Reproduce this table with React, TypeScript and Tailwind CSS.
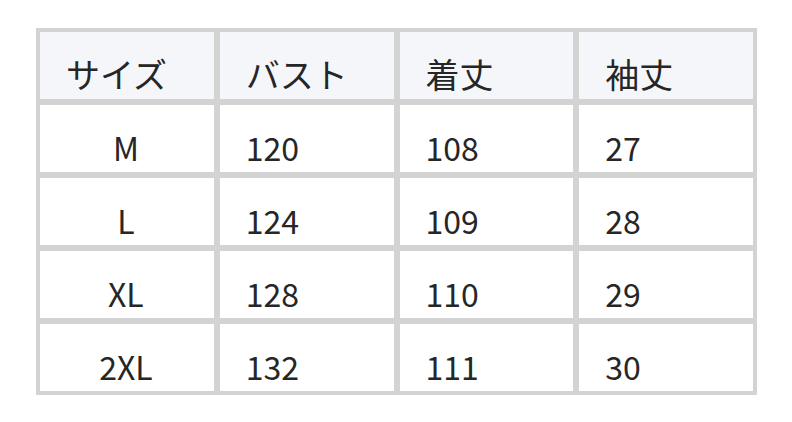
import React from "react";

const headers = ["サイズ", "バスト", "着丈", "袖丈"];
const rows = [
  ["M", "120", "108", "27"],
  ["L", "124", "109", "28"],
  ["XL", "128", "110", "29"],
  ["2XL", "132", "111", "30"],
];

export default function App() {
  return (
    <div className="w-[792px] h-[422px] bg-white pt-[28px] pl-[36px]" style={{ fontFamily: '"Noto Sans CJK JP", "Noto Sans", sans-serif' }}>
      <div className="w-[721px] border-[4px] border-[#d3d3d3] bg-[#d3d3d3] grid grid-cols-4 gap-[6px] text-[32px] leading-[48px] text-[#262626]">
        {headers.map((h) => (
          <div key={h} className="h-[67px] bg-[#f5f6fa] flex items-end pb-[1px] pl-[26px] text-[34px]">
            {h}
          </div>
        ))}
        {rows.map((r) =>
          r.map((c, i) => (
            <div
              key={r[0] + i}
              className={
                i === 0
                  ? "h-[67px] bg-white flex items-end justify-center pb-[1px] pr-[2px]"
                  : "h-[67px] bg-white flex items-end pb-[1px] pl-[26px]"
              }
            >
              {c}
            </div>
          ))
        )}
      </div>
    </div>
  );
}
